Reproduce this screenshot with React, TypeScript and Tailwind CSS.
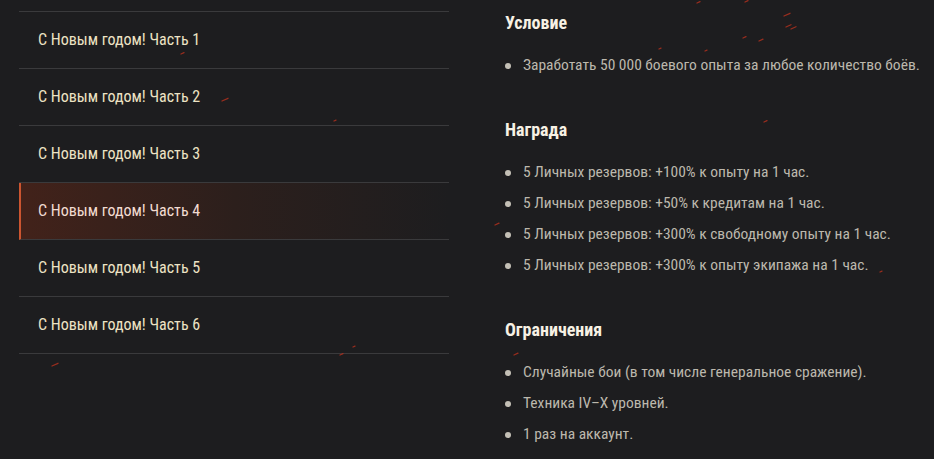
import React from 'react';

const parts = [1, 2, 3, 4, 5, 6];

const sections = [
  {
    title: 'Условие',
    items: ['Заработать 50 000 боевого опыта за любое количество боёв.'],
  },
  {
    title: 'Награда',
    items: [
      '5 Личных резервов: +100% к опыту на 1 час.',
      '5 Личных резервов: +50% к кредитам на 1 час.',
      '5 Личных резервов: +300% к свободному опыту на 1 час.',
      '5 Личных резервов: +300% к опыту экипажа на 1 час.',
    ],
  },
  {
    title: 'Ограничения',
    items: [
      'Случайные бои (в том числе генеральное сражение).',
      'Техника IV–X уровней.',
      '1 раз на аккаунт.',
    ],
  },
];

// red sparks floating over the page
const sparks = [
  [222, 101, 6], [181, 54, 3], [334, 121, 2], [52, 366, 6], [340, 355, 3], [353, 347, 2],
  [697, 3, 3], [745, 2, 3], [784, 16, 6], [786, 27, 5], [743, 38, 3], [759, 41, 4], [791, 29, 5],
  [659, 49, 2], [705, 51, 2], [764, 122, 3], [495, 225, 4], [514, 355, 4], [880, 272, 2],
];

export default function App() {
  return (
    <div
      className="relative w-[934px] h-[459px] overflow-hidden bg-[#1d1d1f] text-[#ede3c4] font-stretch-condensed"
      style={{ fontFamily: '"Roboto Condensed", "Roboto", sans-serif' }}
    >
      <div className="flex pt-[11px]">
        <div className="w-[430px] shrink-0 ml-[19px] border-t border-[#3a3a3c]">
          {parts.map((n) => (
            <div
              key={n}
              className={
                n === 4
                  ? 'h-[57px] flex items-center pl-[17px] border-b border-[#3a3a3c] border-l-2 border-l-[#cc5530] bg-gradient-to-r from-[#42221a] via-[#2c1f1c] to-[#1d1d1f] text-[#f2dcd2]'
                  : 'h-[57px] flex items-center pl-[19px] border-b border-[#3a3a3c]'
              }
            >
              <span className="text-[16px]">С Новым годом! Часть {n}</span>
            </div>
          ))}
        </div>

        <div className="ml-[56px] -mt-[11px] pt-[13px] whitespace-nowrap">
          {sections.map((s, i) => (
            <div key={s.title} className={i === 0 ? '' : 'mt-[44px]'}>
              <h3 className="text-[18px] font-bold leading-[20px] text-[#f7f1e4]">{s.title}</h3>
              <ul className="mt-[23px] flex flex-col gap-[11px]">
                {s.items.map((t) => (
                  <li key={t} className="flex items-center h-[20px] text-[15.5px] text-[#bcb8ad]">
                    <span className="w-[6px] h-[6px] rounded-full bg-[#c4c0b6] mr-[12px]" />
                    {t}
                  </li>
                ))}
              </ul>
            </div>
          ))}
        </div>
      </div>

      <svg className="absolute inset-0 pointer-events-none" width="934" height="459">
        {sparks.map(([x, y, l], i) => (
          <line
            key={i}
            x1={x}
            y1={y}
            x2={x + l}
            y2={y - l * 0.45}
            stroke="#b8321e"
            strokeWidth="1.3"
            strokeLinecap="round"
            opacity="0.8"
          />
        ))}
      </svg>
    </div>
  );
}
